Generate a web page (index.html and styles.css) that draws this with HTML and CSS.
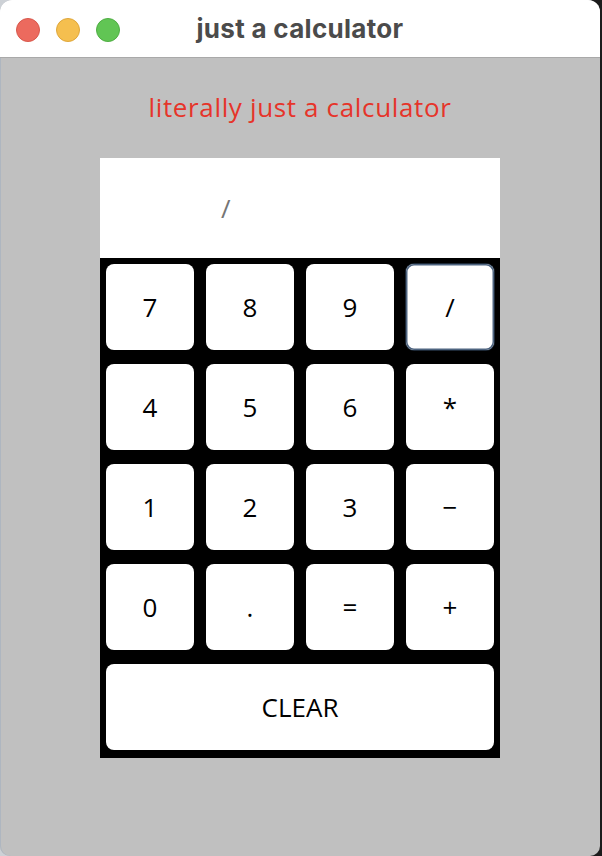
FILE: index.html
```html
<!DOCTYPE html>
<html>
<head>
<meta charset="utf-8">
<title>just a calculator</title>
<link rel="stylesheet" href="styles.css">
</head>
<body>
<div class="window">
  <div class="titlebar">
    <div class="lights">
      <span class="light red"></span>
      <span class="light yellow"></span>
      <span class="light green"></span>
    </div>
    <div class="title">just a calculator</div>
  </div>
  <div class="content">
    <h1 class="heading">literally just a calculator</h1>
    <div class="calc">
      <div class="display"><span class="display-text">/</span></div>
      <div class="keys">
        <button class="key">7</button>
        <button class="key">8</button>
        <button class="key">9</button>
        <button class="key focused">/</button>
        <button class="key">4</button>
        <button class="key">5</button>
        <button class="key">6</button>
        <button class="key">*</button>
        <button class="key">1</button>
        <button class="key">2</button>
        <button class="key">3</button>
        <button class="key">&minus;</button>
        <button class="key">0</button>
        <button class="key">.</button>
        <button class="key">=</button>
        <button class="key">+</button>
        <button class="key wide">CLEAR</button>
      </div>
    </div>
  </div>
</div>
</body>
</html>
```

FILE: styles.css
```css
html, body {
  margin: 0;
  padding: 0;
  height: 856px;
  overflow: hidden;
}
body {
  background: linear-gradient(to right, #cdd1d6 0, #cdd1d6 262px, #1b1b1b 262px);
  font-family: "Open Sans", sans-serif;
}
.window {
  box-sizing: border-box;
  width: 600px;
  height: 856px;
  border-radius: 12px 12px 10px 10px;
  overflow: hidden;
  background: #c0c0c0;
  box-shadow: inset 1px 0 0 #aeb6c0;
  display: flex;
  flex-direction: column;
}
.titlebar {
  height: 57px;
  background: #ffffff;
  border-bottom: 1px solid #a9a9a9;
  display: flex;
  align-items: center;
  position: relative;
  flex-shrink: 0;
}
.lights {
  display: flex;
  gap: 16px;
  padding-left: 16px;
  padding-top: 2px;
}
.light {
  width: 24px;
  height: 24px;
  border-radius: 50%;
  box-sizing: border-box;
}
.red { background: #ec6a5e; border: 1px solid #d8584c; }
.yellow { background: #f5bf4f; border: 1px solid #dfa73b; }
.green { background: #61c554; border: 1px solid #4fae43; }
.title {
  position: absolute;
  left: 0;
  right: 0;
  top: 0;
  height: 57px;
  line-height: 57px;
  text-align: center;
  font-family: "Inter", "Roboto", sans-serif;
  font-weight: 700;
  font-size: 26px;
  letter-spacing: 0.3px;
  color: #4b4b4b;
}
.content {
  display: flex;
  flex-direction: column;
  align-items: center;
}
.heading {
  margin: 32px 0 0 0;
  height: 68px;
  line-height: 34px;
  font-weight: normal;
  font-size: 26px;
  letter-spacing: 0.65px;
  color: #e6342a;
  font-family: "Open Sans", sans-serif;
}
.calc {
  width: 400px;
}
.display {
  height: 100px;
  background: #ffffff;
  display: flex;
  align-items: center;
}
.display-text {
  padding-left: 121px;
  font-size: 26px;
  color: #757575;
}
.keys {
  background: #000000;
  display: grid;
  grid-template-columns: repeat(4, 88px);
  grid-auto-rows: 86px;
  column-gap: 12px;
  row-gap: 14px;
  padding: 6px 6px 8px 6px;
}
.key {
  border: none;
  background: #ffffff;
  border-radius: 8px;
  font-family: "Open Sans", sans-serif;
  font-size: 26px;
  color: #000000;
  padding: 0;
  margin: 0;
}
.key.wide {
  grid-column: 1 / span 4;
}
.key.focused {
  box-shadow: inset 0 0 0 1.5px #4e6480, 0 0 0 1px #1c2836;
}
```
